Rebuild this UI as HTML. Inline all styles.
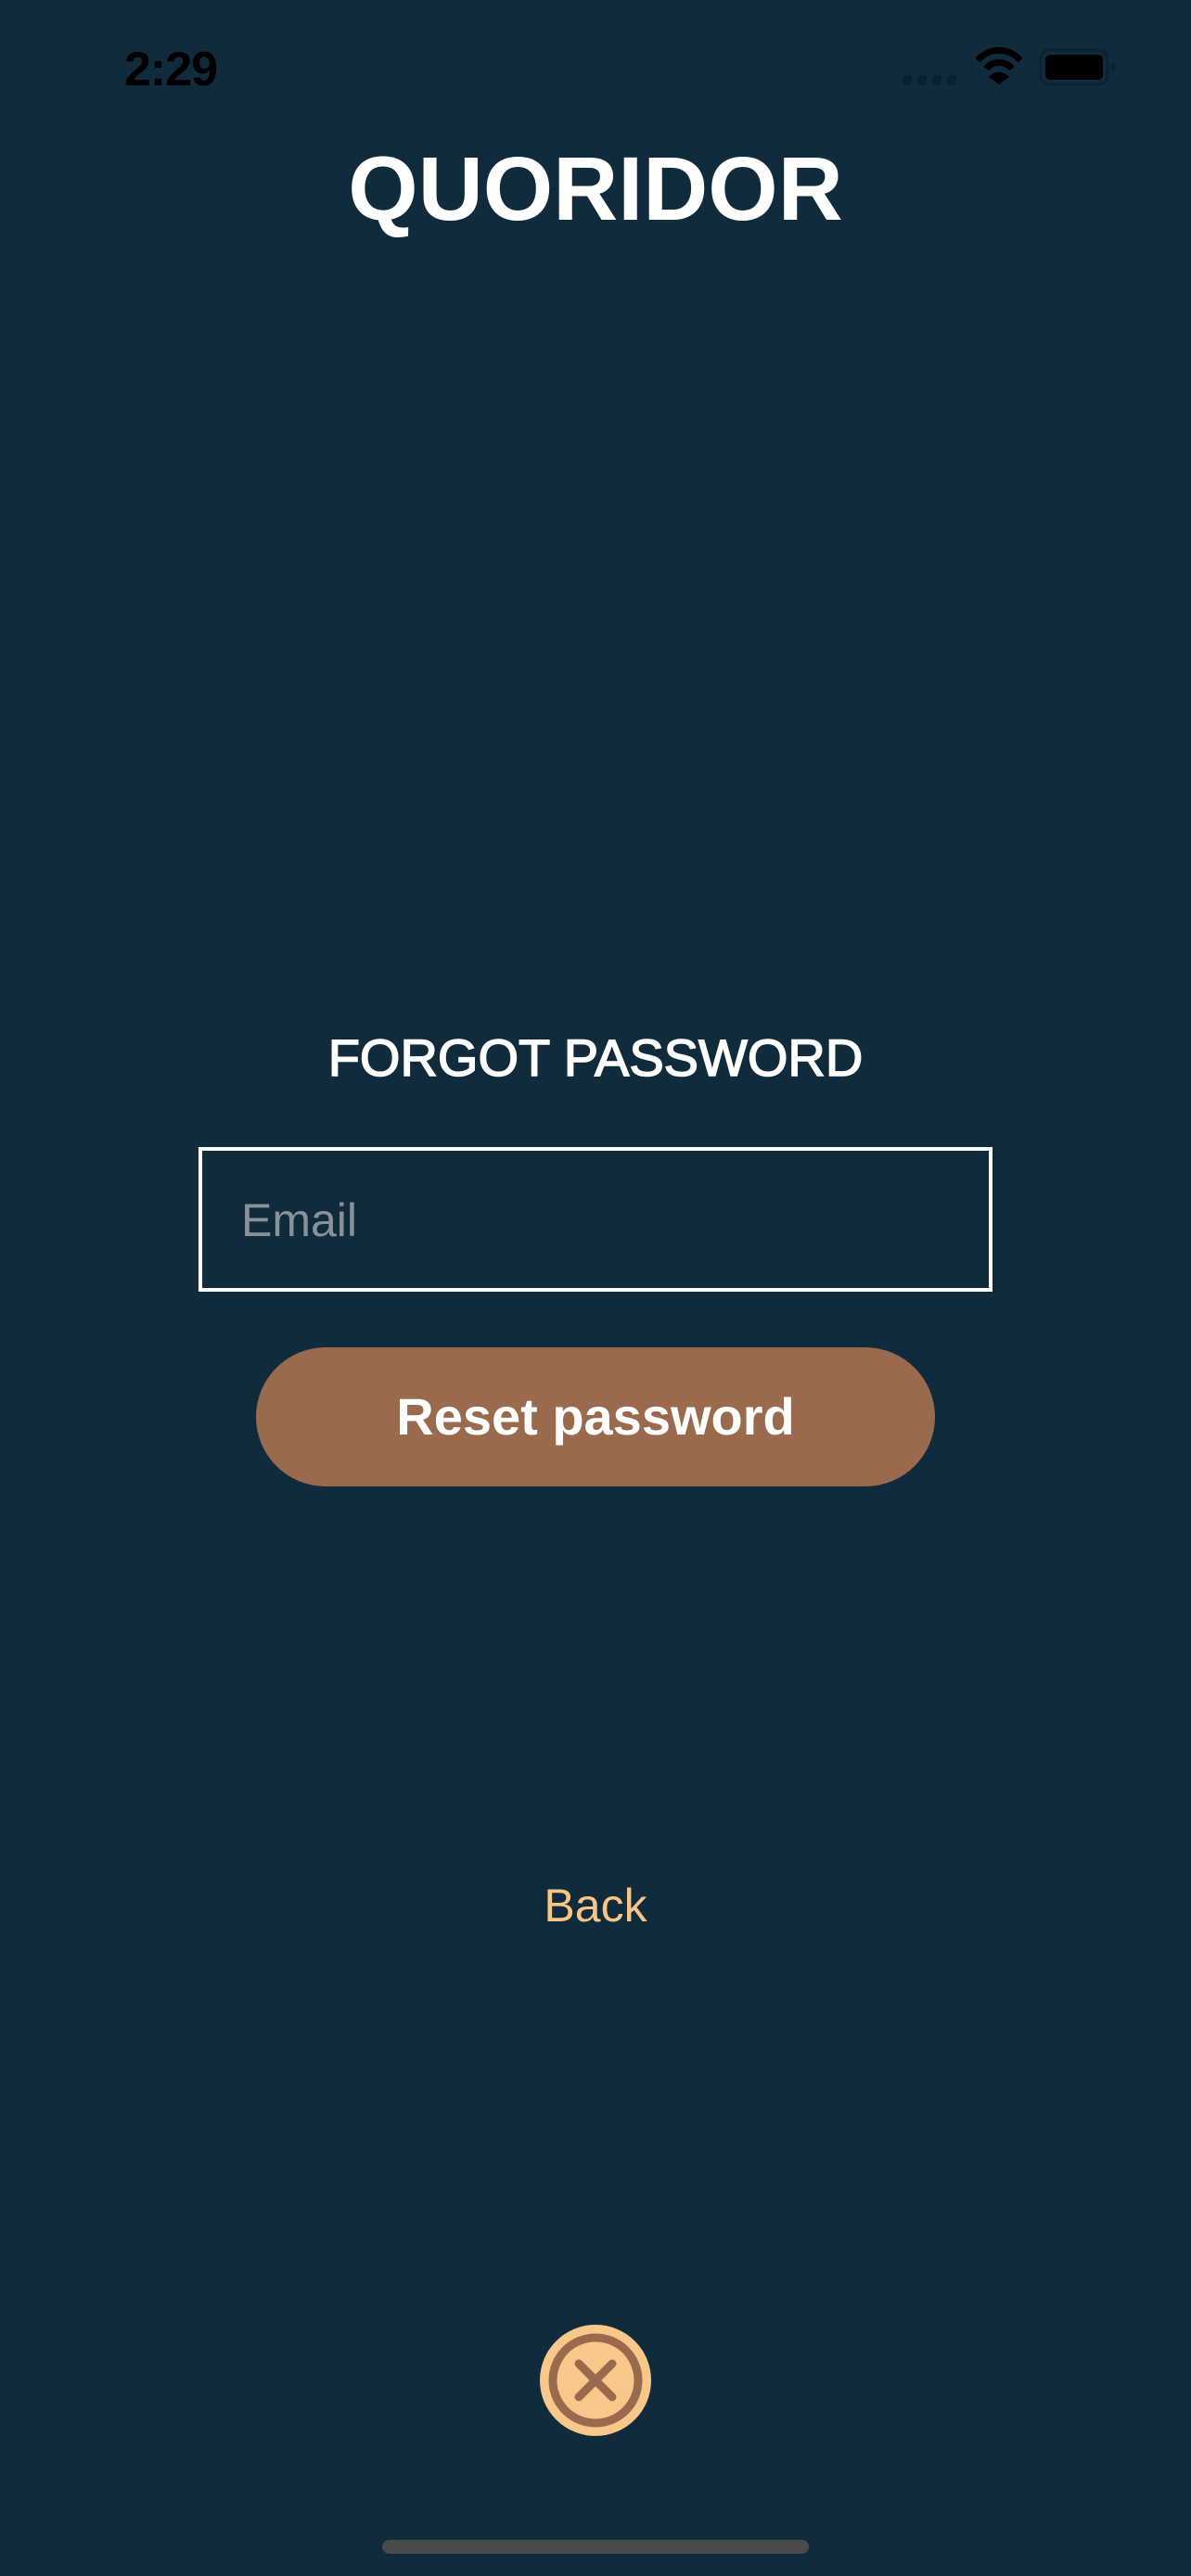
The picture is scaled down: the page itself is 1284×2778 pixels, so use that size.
<!DOCTYPE html>
<html><head><meta charset="utf-8"><style>
html,body{margin:0;padding:0}
body{width:1284px;height:2778px;background:#102b3c;position:relative;overflow:hidden;font-family:"Liberation Sans",sans-serif}
.a{position:absolute}
</style></head><body>
<div class="a" style="left:134px;top:42px;font-size:52px;font-weight:bold;color:#000;letter-spacing:-1px;line-height:66px">2:29</div>
<svg class="a" style="left:960px;top:40px" width="250" height="70" viewBox="960 40 250 70">
<rect x="973" y="81" width="10" height="11" rx="3" fill="#0a2230"/>
<rect x="989" y="81" width="10" height="11" rx="3" fill="#0a2230"/>
<rect x="1005" y="81" width="10" height="11" rx="3" fill="#0a2230"/>
<rect x="1021" y="81" width="10" height="11" rx="3" fill="#0a2230"/>
<path d="M1054 65 A30 30 0 0 1 1100 65" stroke="#000" stroke-width="7" fill="none"/>
<path d="M1063 74 A18 18 0 0 1 1091 74" stroke="#000" stroke-width="7" fill="none"/>
<path d="M1066 83 L1077 91 L1088 83 A14 14 0 0 0 1066 83Z" fill="#000"/>
<rect x="1122" y="54" width="72" height="37" rx="9" fill="none" stroke="#0b2230" stroke-width="3"/>
<rect x="1127" y="59" width="62" height="27" rx="5" fill="#000"/>
<path d="M1198 68 a5 5 0 0 1 0 10z" fill="#0b2230"/>
</svg>
<div class="a" style="left:0;width:1284px;top:152px;text-align:center;font-size:97px;font-weight:bold;color:#fff;line-height:104px">QUORIDOR</div>
<div class="a" style="left:0;width:1284px;top:1108px;text-align:center;font-size:56px;color:#fff;line-height:66px;-webkit-text-stroke:1.5px #fff">FORGOT PASSWORD</div>
<div class="a" style="left:214px;top:1237px;width:848px;height:148px;border:4px solid #fff"></div>
<div class="a" style="left:260px;top:1286px;font-size:50px;color:#8a9299;line-height:60px">Email</div>
<div class="a" style="left:276px;top:1453px;width:732px;height:150px;border-radius:75px;background:#9a6a4d;color:#fff;font-size:56px;font-weight:bold;text-align:center;line-height:150px">Reset password</div>
<div class="a" style="left:0;width:1284px;top:2025px;text-align:center;font-size:50px;color:#f7c585;line-height:60px">Back</div>
<svg class="a" style="left:582px;top:2507px" width="120" height="120" viewBox="0 0 120 120">
<circle cx="60" cy="60" r="60" fill="#f7c88a"/>
<circle cx="60" cy="60" r="46" fill="none" stroke="#9a6a4d" stroke-width="9"/>
<path d="M42 42 L78 78 M78 42 L42 78" stroke="#9a6a4d" stroke-width="9" stroke-linecap="round"/>
</svg>
<div class="a" style="left:412px;top:2739px;width:460px;height:15px;border-radius:8px;background:#4a4a4a"></div>
</body></html>
